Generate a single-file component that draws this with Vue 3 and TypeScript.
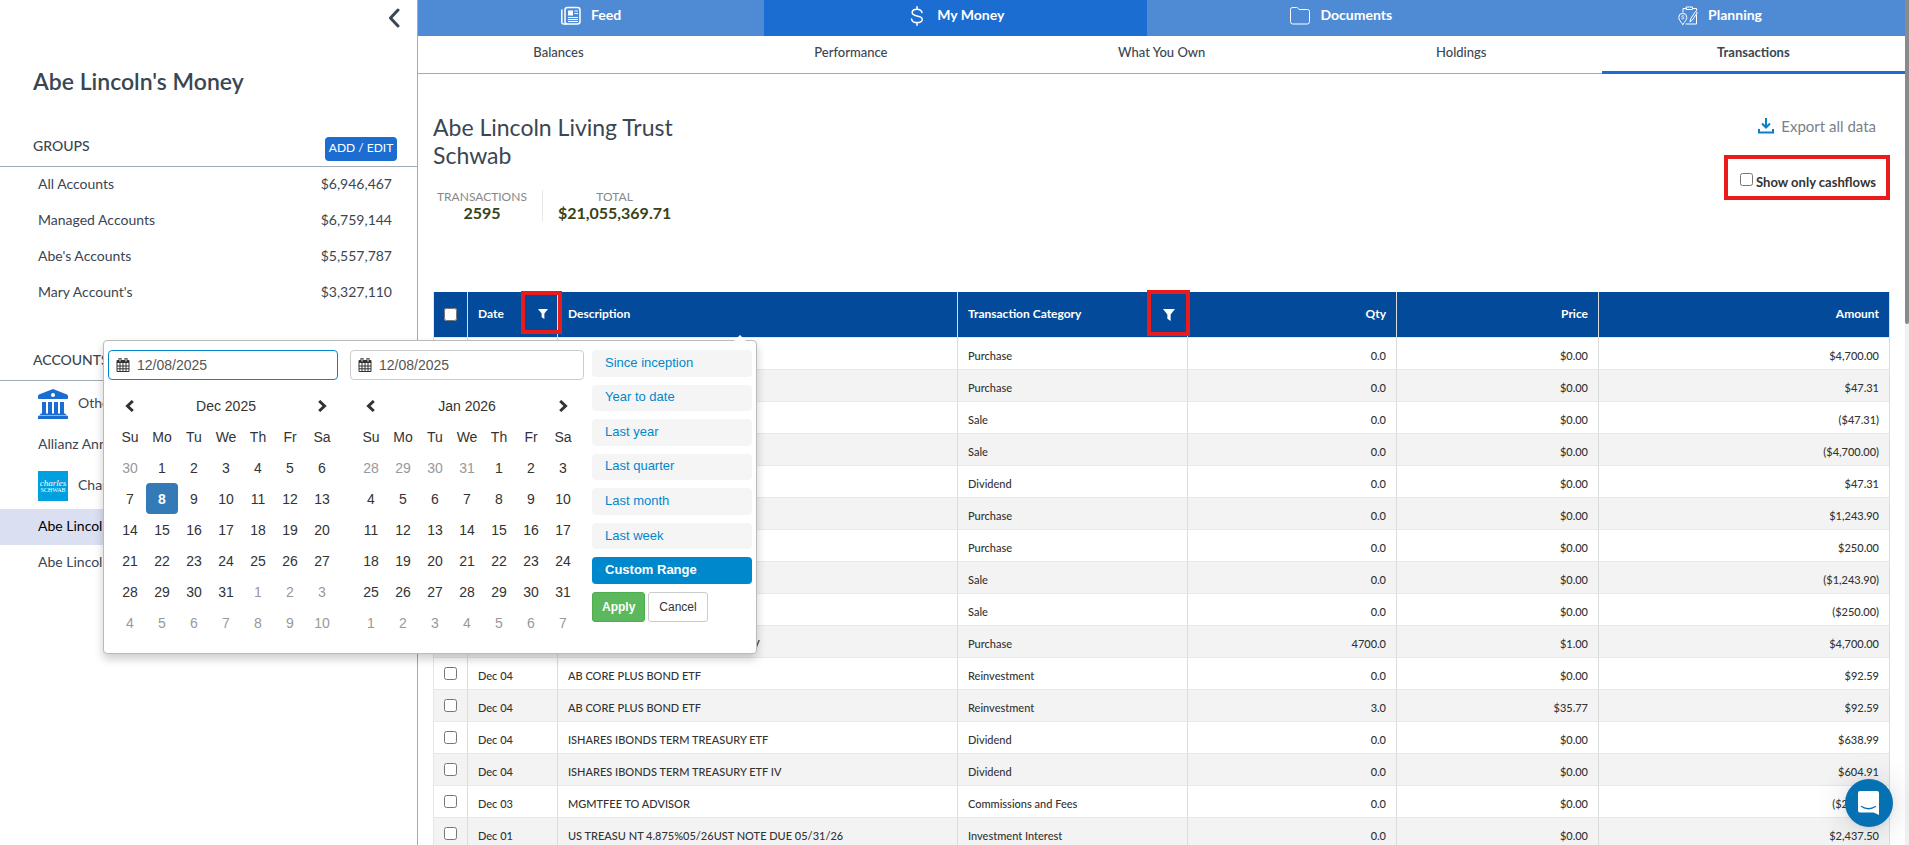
<script setup lang="ts">
import { ref } from 'vue'

interface Txn {
  date: string
  description: string
  category: string
  qty: string
  price: string
  amount: string
}

interface Day {
  label: number
  muted: boolean
  selected: boolean
}

interface Calendar {
  id: string
  title: string
  value: string
  weeks: Day[][]
}

const groups = [
  { name: 'All Accounts', value: '$6,946,467' },
  { name: 'Managed Accounts', value: '$6,759,144' },
  { name: "Abe's Accounts", value: '$5,557,787' },
  { name: "Mary Account's", value: '$3,327,110' },
]

const subTabs = ['Balances', 'Performance', 'What You Own', 'Holdings', 'Transactions']

const txn = (date: string, description: string, category: string, qty: string, price: string, amount: string): Txn => ({
  date, description, category, qty, price, amount,
})

const transactions: Txn[] = [
  txn('', '', 'Purchase', '0.0', '$0.00', '$4,700.00'),
  txn('', '', 'Purchase', '0.0', '$0.00', '$47.31'),
  txn('', '', 'Sale', '0.0', '$0.00', '($47.31)'),
  txn('', '', 'Sale', '0.0', '$0.00', '($4,700.00)'),
  txn('', '', 'Dividend', '0.0', '$0.00', '$47.31'),
  txn('', '', 'Purchase', '0.0', '$0.00', '$1,243.90'),
  txn('', '', 'Purchase', '0.0', '$0.00', '$250.00'),
  txn('', '', 'Sale', '0.0', '$0.00', '($1,243.90)'),
  txn('', '', 'Sale', '0.0', '$0.00', '($250.00)'),
  txn('', 'ISHARES IBONDS TERM TREASURY IV', 'Purchase', '4700.0', '$1.00', '$4,700.00'),
  txn('Dec 04', 'AB CORE PLUS BOND ETF', 'Reinvestment', '0.0', '$0.00', '$92.59'),
  txn('Dec 04', 'AB CORE PLUS BOND ETF', 'Reinvestment', '3.0', '$35.77', '$92.59'),
  txn('Dec 04', 'ISHARES IBONDS TERM TREASURY ETF', 'Dividend', '0.0', '$0.00', '$638.99'),
  txn('Dec 04', 'ISHARES IBONDS TERM TREASURY ETF IV', 'Dividend', '0.0', '$0.00', '$604.91'),
  txn('Dec 03', 'MGMTFEE TO ADVISOR', 'Commissions and Fees', '0.0', '$0.00', '($250.00)'),
  txn('Dec 01', 'US TREASU NT 4.875%05/26UST NOTE DUE 05/31/26', 'Investment Interest', '0.0', '$0.00', '$2,437.50'),
]

const weekdays = ['Su', 'Mo', 'Tu', 'We', 'Th', 'Fr', 'Sa']

function buildWeeks(year: number, month: number, lead: number, selected?: number): Day[][] {
  return Array.from({ length: 6 }, (_, w) =>
    Array.from({ length: 7 }, (_, d) => {
      const date = new Date(year, month, 1 - lead + w * 7 + d)
      const inMonth = date.getMonth() === month
      return { label: date.getDate(), muted: !inMonth, selected: inMonth && date.getDate() === selected }
    }),
  )
}

const calendars = ref<Calendar[]>([
  { id: 'start', title: 'Dec 2025', value: '12/08/2025', weeks: buildWeeks(2025, 11, 1, 8) },
  { id: 'end', title: 'Jan 2026', value: '12/08/2025', weeks: buildWeeks(2026, 0, 4) },
])

const ranges = ['Since inception', 'Year to date', 'Last year', 'Last quarter', 'Last month', 'Last week', 'Custom Range']
const activeRange = ref('Custom Range')
</script>

<template>
  <div class="app">
    <aside class="sidebar">
      <button class="collapse" type="button" aria-label="Collapse sidebar">
        <svg width="12" height="20" viewBox="0 0 12 20"><path d="M10 2 2.500 10 10 18" fill="none" stroke="#3a4652" stroke-width="3" stroke-linecap="round" stroke-linejoin="round" /></svg>
      </button>
      <h1 class="owner">Abe Lincoln's Money</h1>

      <div class="section-head">
        <h2>GROUPS</h2>
        <button class="add-edit" type="button">ADD / EDIT</button>
      </div>
      <ul class="list">
        <li v-for="g in groups" :key="g.name">
          <a href="#" class="row"><span>{{ g.name }}</span><span>{{ g.value }}</span></a>
        </li>
      </ul>

      <div class="section-head">
        <h2>ACCOUNTS</h2>
      </div>
      <ul class="list">
        <li class="institution">
          <svg width="30" height="30" viewBox="0 0 30 30" fill="#1b6dd1">
            <path fill-rule="evenodd" d="M15 0 29 5.500Q30 6 30 7V9Q30 10 29 10H1Q0 10 0 9V7Q0 6 1 5.500ZM15 4a2 2 0 1 0 0 4 2 2 0 0 0 0-4Z" />
            <path d="M4 13h4v12H4zM10 13h4v12h-4zM16 13h4v12h-4zM22 13h4v12h-4z" />
            <path d="M3 24.500h24q1 0 1 1.500H2q0-1.500 1-1.500zM1 26.500h28q1 0 1 1.500v2H0v-2q0-1.500 1-1.500z" />
          </svg>
          <span>Other</span>
        </li>
        <li><a href="#" class="row"><span>Allianz Annuity</span></a></li>
        <li class="institution">
          <span class="schwab"><i>charles</i><b>SCHWAB</b></span>
          <span>Charles Schwab</span>
        </li>
        <li><a href="#" class="row active"><span>Abe Lincoln Living Trust</span></a></li>
        <li><a href="#" class="row"><span>Abe Lincoln IRA</span></a></li>
      </ul>
    </aside>

    <main class="main">
      <nav class="primary">
        <a href="#">
          <svg width="20" height="20" viewBox="0 0 20 20" fill="none" stroke="#fff">
            <rect x="4" y="1.500" width="15" height="16.500" rx="2.500" stroke-width="1.500" />
            <path d="M.8 3.500V16q0 2 2 2H6" stroke-width="1.500" />
            <path d="M7 4.500h5v5H7z" fill="#fff" stroke="none" />
            <path d="M13.500 5h3.500M13.500 7.500h3.500M7 11.500h10M7 13.500h10M7 15.500h10" />
          </svg>
          <span>Feed</span>
        </a>
        <a href="#" class="active">
          <svg width="20" height="20" viewBox="0 0 20 20" fill="none" stroke="#fff" stroke-width="1.500" stroke-linecap="round">
            <path d="M10 .8v2.400M10 16.500v2.700M15 6.500C14.500 4.300 12.700 3.200 10 3.200S5.200 4.500 5.200 6.500c0 2.200 2 2.900 4.800 3.400s5.300 1.100 5.300 3.300-2.200 3.400-5.300 3.400-5.100-1.300-5.400-3.500" />
          </svg>
          <span>My Money</span>
        </a>
        <a href="#">
          <svg width="20" height="20" viewBox="0 0 20 20" fill="none" stroke="#fff">
            <path d="M.5 15.500V3.500Q.5 1.500 2.500 1.500H6.500Q7.500 1.500 8.200 2.500T10 3.500H17.500Q19.500 3.500 19.500 5.500V15.500Q19.500 18 17.500 18H2.500Q.5 18 .5 15.500Z" />
          </svg>
          <span>Documents</span>
        </a>
        <a href="#">
          <svg width="20" height="20" viewBox="0 0 20 20" fill="none" stroke="#fff" stroke-linecap="round" stroke-linejoin="round">
            <path d="M5 6V2.500H8M8.500 1h6v2.500h-6zM15 2.500h3.500v2M18.500 9v9H8" />
            <path d="M4.800 18.500C2.500 15.500.8 13.500.8 11.300a4 4 0 0 1 8 0c0 2.200-1.700 4.200-4 7.200Z" />
            <path d="M6 10C5 9.200 3.700 9.600 3.800 10.400s2.200.7 2.200 1.600-1.500 1.200-2.400.4" stroke-width=".8" />
            <path d="M12 15.500 12.800 12.500 17.500 5.500 19.300 6.700 14.500 13.800Z" />
          </svg>
          <span>Planning</span>
        </a>
      </nav>

      <nav class="secondary">
        <a v-for="t in subTabs" :key="t" href="#" :class="{ active: t === 'Transactions' }">{{ t }}</a>
      </nav>

      <div class="content">
        <header class="summary">
          <div>
            <h2 class="account">Abe Lincoln Living Trust<br />Schwab</h2>
            <dl class="stats">
              <div><dt>TRANSACTIONS</dt><dd>2595</dd></div>
              <div><dt>TOTAL</dt><dd>$21,055,369.71</dd></div>
            </dl>
          </div>
          <div class="actions">
            <button class="export" type="button">
              <svg width="16" height="16" viewBox="0 0 16 16" fill="none" stroke="#0a7fc7" stroke-width="2">
                <path d="M8 0V9M4 5.500 8 9.500 12 5.500M1 11V14.500H15V11" />
              </svg>
              Export all data
            </button>
            <div class="cashflows">
              <input id="cashflows" type="checkbox" />
              <label for="cashflows">Show only cashflows</label>
            </div>
          </div>
        </header>

        <table class="transactions">
          <colgroup>
            <col class="c-check" /><col class="c-date" /><col class="c-desc" /><col class="c-cat" />
            <col class="c-qty" /><col class="c-price" /><col class="c-amount" />
          </colgroup>
          <thead>
            <tr>
              <th class="check"><input type="checkbox" aria-label="Select all transactions" /></th>
              <th>
                Date
                <button class="filter date-filter" type="button" aria-label="Filter by date">
                  <svg width="10" height="10" viewBox="0 0 11 11"><path d="M0 0H11L7 5V11L4 9V5Z" fill="#fff" /></svg>
                </button>
              </th>
              <th>Description</th>
              <th>
                Transaction Category
                <button class="filter category-filter" type="button" aria-label="Filter by category">
                  <svg width="12" height="12" viewBox="0 0 11 11"><path d="M0 0H11L7 5V11L4 9V5Z" fill="#fff" /></svg>
                </button>
              </th>
              <th class="num">Qty</th>
              <th class="num">Price</th>
              <th class="num">Amount</th>
            </tr>
          </thead>
          <tbody>
            <tr v-for="(t, i) in transactions" :key="i">
              <td class="check"><input type="checkbox" :aria-label="`Select transaction ${i + 1}`" /></td>
              <td>{{ t.date }}</td>
              <td>{{ t.description }}</td>
              <td>{{ t.category }}</td>
              <td class="num">{{ t.qty }}</td>
              <td class="num">{{ t.price }}</td>
              <td class="num">{{ t.amount }}</td>
            </tr>
          </tbody>
        </table>
      </div>
    </main>

    <div class="scrollbar"><div class="thumb"></div></div>

    <section class="picker" aria-label="Date range">
      <div v-for="c in calendars" :key="c.id" class="calendar" :class="c.id">
        <div class="field" :class="{ focused: c.id === 'start' }">
          <svg width="14" height="14" viewBox="0 0 14 14">
            <path d="M1 2.500h12V13.500H1z" fill="none" stroke="#333" />
            <path d="M1 2h12v3H1z" fill="#333" />
            <path d="M4 5v8.500M7 5v8.500M10 5v8.500M1 8h12M1 10.800h12" stroke="#333" fill="none" />
            <path d="M3 0h2v4H3zM9 0h2v4H9z" fill="#fff" stroke="#333" />
          </svg>
          <input v-model="c.value" type="text" :aria-label="`Range ${c.id} date`" />
        </div>
        <table class="days">
          <thead>
            <tr>
              <th><button type="button" aria-label="Previous month"><svg width="10" height="12" viewBox="0 0 10 12"><path d="M7.800 1 2.500 6 7.800 11" fill="none" stroke="#333" stroke-width="3" /></svg></button></th>
              <th colspan="5">{{ c.title }}</th>
              <th><button type="button" aria-label="Next month"><svg width="10" height="12" viewBox="0 0 10 12"><path d="M2.200 1 7.500 6 2.200 11" fill="none" stroke="#333" stroke-width="3" /></svg></button></th>
            </tr>
            <tr><th v-for="d in weekdays" :key="d">{{ d }}</th></tr>
          </thead>
          <tbody>
            <tr v-for="(week, w) in c.weeks" :key="w">
              <td v-for="(d, i) in week" :key="i" :class="{ muted: d.muted, selected: d.selected }">{{ d.label }}</td>
            </tr>
          </tbody>
        </table>
      </div>
      <div class="ranges">
        <div class="range-list">
          <button v-for="r in ranges" :key="r" type="button" :class="{ active: r === activeRange }" @click="activeRange = r">{{ r }}</button>
        </div>
        <div class="range-buttons">
          <button class="apply" type="button">Apply</button>
          <button class="cancel" type="button">Cancel</button>
        </div>
      </div>
    </section>

    <button class="chat" type="button" aria-label="Open chat">
      <svg width="24" height="26" viewBox="0 0 24 26">
        <path d="M3 1H20Q22 1 22 3V25L16.500 22.500H3Q1 22.500 1 20.500V3Q1 1 3 1Z" fill="#fff" />
        <path d="M4.500 16.500Q11.500 21 18.500 16.500" fill="none" stroke="#0571b3" stroke-width="1.300" stroke-linecap="round" />
      </svg>
    </button>
  </div>
</template>

<style>
html,
body {
  margin: 0;
  height: 100%;
  overflow: hidden;
}
#app {
  height: 100%;
}
</style>

<style scoped>
.app {
  position: relative;
  display: flex;
  height: 100%;
  overflow: hidden;
  background: #fff;
  color: #3a4652;
  font-family: Lato, "Liberation Sans", sans-serif;
  font-size: 14px;
}
.app *,
.app *::before {
  box-sizing: border-box;
}
button,
input {
  font: inherit;
}
button {
  padding: 0;
  border: 0;
  background: none;
  cursor: pointer;
}
a {
  color: inherit;
  text-decoration: none;
}
svg {
  display: block;
  flex: none;
}
h1,
h2,
ul,
dl,
dd {
  margin: 0;
  padding: 0;
}

/* Sidebar */
.sidebar {
  flex: none;
  display: flex;
  flex-direction: column;
  width: 418px;
  border-right: 1px solid #a2aab3;
}
.collapse {
  align-self: flex-end;
  margin: 8px 17px 0 0;
}
.owner {
  margin: 39px 33px 2px;
  font-size: 23px;
  line-height: 28px;
  font-weight: 600;
}
.section-head {
  display: flex;
  justify-content: space-between;
  align-items: flex-start;
  height: 45px;
  margin-top: 25px;
  padding: 14px 20px 0 33px;
  border-bottom: 1px solid #a2aab3;
}
.section-head h2 {
  font-size: 14px;
  line-height: 20px;
  font-weight: 500;
}
.add-edit {
  width: 72px;
  height: 24px;
  margin-top: 1px;
  padding-bottom: 3px;
  border-radius: 4px;
  background: #1b6dd1;
  color: #fff;
  font-size: 12px;
}
.list {
  list-style: none;
}
.row {
  display: flex;
  justify-content: space-between;
  padding: 7px 25px 9px 38px;
  line-height: 20px;
}
.row.active {
  background: #dae0f1;
  color: #000;
}
.institution {
  display: flex;
  gap: 10px;
  padding: 8px 38px;
  line-height: 28px;
}
.schwab {
  display: flex;
  flex-direction: column;
  align-items: center;
  justify-content: center;
  width: 30px;
  height: 30px;
  background: #009fdf;
  color: #fff;
  font-family: "Liberation Serif", serif;
  font-size: 9px;
  line-height: 8px;
}
.schwab b {
  font-size: 6px;
  line-height: 6px;
  font-weight: 400;
}

/* Navigation */
.main {
  flex: 1;
  min-width: 0;
}
.primary,
.secondary {
  display: flex;
}
.primary a {
  flex: 1 1 auto;
  display: flex;
  justify-content: center;
  gap: 10px;
  height: 36px;
  padding-top: 6px;
  background: #4f8bd4;
  color: #fff;
  font-weight: 700;
  line-height: 18px;
}
.primary a.active {
  background: #1b6dd1;
}
.secondary {
  border-bottom: 1px solid #a2aab3;
  font-size: 13px;
  font-weight: 500;
}
.secondary a {
  flex: 1 1 auto;
  height: 38px;
  margin-bottom: -1px;
  padding-top: 6px;
  line-height: 20px;
  text-align: center;
}
.secondary a.active {
  border-bottom: 3px solid #1b6dd1;
  font-weight: 700;
}

/* Summary */
.content {
  padding: 39px 15px 0;
}
.summary {
  display: flex;
  justify-content: space-between;
  height: 179px;
}
.account {
  font-size: 23px;
  line-height: 28px;
  font-weight: 400;
}
.stats {
  display: flex;
  margin-top: 21px;
  text-align: center;
}
.stats > div {
  padding: 0 15px 0 4px;
}
.stats > div + div {
  padding-left: 15px;
  border-left: 1px solid #e8e8e8;
}
.stats dt {
  color: #888;
  font-size: 12px;
  line-height: 14px;
}
.stats dd {
  color: #3a4216;
  font-size: 16px;
  line-height: 18px;
  font-weight: 700;
}
.actions {
  display: flex;
  flex-direction: column;
  align-items: flex-end;
}
.export {
  display: flex;
  align-items: center;
  gap: 7px;
  margin: 3px 14px 0 0;
  color: #7a8087;
  font-size: 15px;
  line-height: 20px;
}
.cashflows {
  display: flex;
  align-items: center;
  gap: 3px;
  height: 45px;
  margin-top: 19px;
  padding: 8px 10px 0 12px;
  border: 4px solid #e81c1c;
  color: #333;
  font-size: 13px;
  font-weight: 700;
}
input[type="checkbox"] {
  display: block;
  width: 13px;
  height: 13px;
  margin: 0;
}
.cashflows input[type="checkbox"] {
  margin-bottom: 5px;
}

/* Transactions */
.transactions {
  width: 100%;
  border-spacing: 0;
  border-left: 1px solid #e6e6e6;
  table-layout: fixed;
  color: #333;
  font-size: 11px;
  font-weight: 500;
}
.c-check { width: 34px; }
.c-date { width: 90px; }
.c-desc { width: 400px; }
.c-cat { width: 230px; }
.c-qty { width: 209px; }
.c-price { width: 202px; }
.c-amount { width: 291px; }
.transactions th,
.transactions td {
  padding: 0 10px;
  border-right: 1px solid #dcdcdc;
  border-bottom: 1px solid #e8e8e8;
  text-align: left;
  white-space: nowrap;
}
.transactions th {
  position: relative;
  height: 46px;
  padding-bottom: 2px;
  background: #034a9a;
  color: #fff;
  font-size: 12px;
  font-weight: 700;
}
.transactions th.check {
  padding-bottom: 0;
}
.transactions td {
  height: 32px;
  padding-top: 3px;
}
.transactions td.check {
  padding-top: 0;
}
.transactions tbody tr:nth-child(even) {
  background: #f3f3f3;
}
.transactions .num {
  text-align: right;
}
.filter {
  position: absolute;
  z-index: 1;
  display: grid;
  place-items: center;
  padding-top: 3px;
  border: 4px solid #e81c1c;
}
.date-filter {
  top: -1px;
  right: -5px;
  width: 41px;
  height: 43px;
  padding-left: 3px;
}
.category-filter {
  top: -2px;
  right: -3px;
  width: 43px;
  height: 46px;
}

/* Scrollbar */
.scrollbar {
  flex: none;
  width: 4px;
  background: #f1f1f1;
}
.thumb {
  height: 324px;
  border-radius: 0 0 4px 4px;
  background: #8a8a8a;
}

/* Date range picker */
.picker {
  position: absolute;
  top: 340px;
  left: 103px;
  z-index: 2;
  display: flex;
  width: 654px;
  height: 314px;
  padding: 9px 4px;
  border: 1px solid #bbb;
  border-radius: 4px;
  background: #fff;
  box-shadow: 0 5px 10px rgba(0, 0, 0, 0.2);
  color: #333;
  font-family: "Liberation Sans", Arial, sans-serif;
}
.picker::before {
  content: "";
  position: absolute;
  top: -6px;
  right: 10px;
  border: solid transparent;
  border-width: 0 6px 6px;
  border-bottom-color: #fff;
}
.calendar.start {
  width: 230px;
}
.calendar.end {
  width: 234px;
  margin-left: 12px;
}
.field {
  display: flex;
  align-items: center;
  gap: 7px;
  height: 30px;
  padding: 0 7px;
  border: 1px solid #ccc;
  border-radius: 4px;
}
.field.focused {
  border-color: #0088cc;
}
.field input {
  flex: 1;
  min-width: 0;
  padding: 0;
  border: 0;
  outline: 0;
  background: none;
  color: #555;
}
.days {
  width: 224px;
  margin: 10px 0 0 5px;
  border-spacing: 0;
  table-layout: fixed;
}
.start .days {
  margin-left: 6px;
}
.days th,
.days td {
  height: 31px;
  padding: 0;
  font-weight: 400;
  text-align: center;
}
.days button {
  display: grid;
  place-items: center;
  width: 100%;
  height: 31px;
}
.days .muted {
  color: #999;
}
.days .selected {
  border-radius: 4px;
  background: #337ab7;
  color: #fff;
  font-weight: 700;
}
.ranges {
  width: 160px;
  margin-left: 8px;
}
.range-list {
  display: grid;
  grid-template-rows: repeat(7, 1fr);
  gap: 8px;
  height: 234px;
}
.range-list button {
  padding: 0 13px 2px;
  border-radius: 4px;
  background: #f5f5f5;
  color: #0088cc;
  font-size: 13px;
  text-align: left;
}
.range-list button.active {
  background: #0088cc;
  color: #fff;
  font-weight: 700;
}
.range-buttons {
  display: flex;
  gap: 3px;
  margin-top: 8px;
  font-size: 12px;
}
.range-buttons button {
  height: 30px;
  padding: 0 10px;
  border: 1px solid #ccc;
  border-radius: 3px;
}
.range-buttons .apply {
  padding: 0 9px;
  border-color: #4cae4c;
  background: #5cb85c;
  color: #fff;
  font-weight: 700;
}
.range-buttons .cancel {
  color: #333;
}

/* Chat launcher */
.chat {
  position: absolute;
  right: 16px;
  bottom: 18px;
  z-index: 3;
  display: grid;
  place-items: center;
  width: 48px;
  height: 48px;
  border-radius: 50%;
  background: #0571b3;
  box-shadow: 0 1px 6px rgba(0, 0, 0, 0.06), 0 2px 32px rgba(0, 0, 0, 0.16);
}
</style>
